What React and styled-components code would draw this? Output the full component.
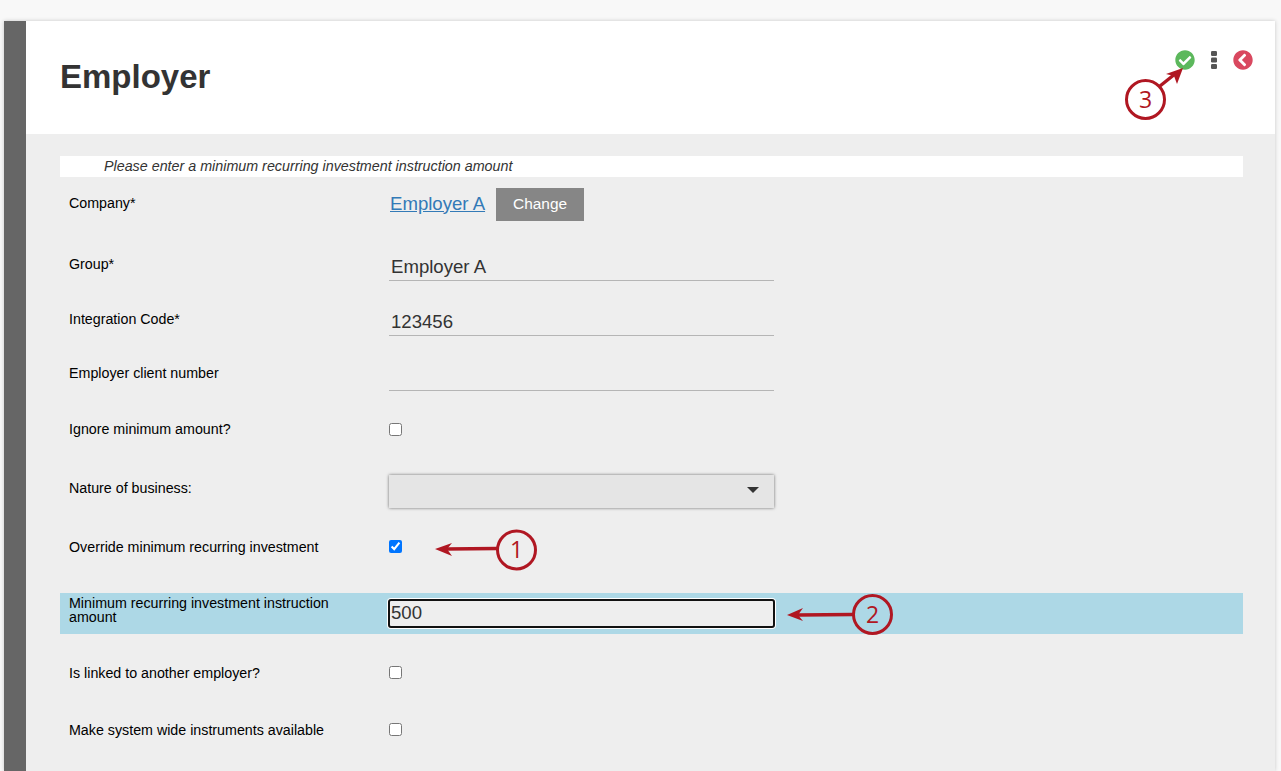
import React from 'react';
import styled, { createGlobalStyle } from 'styled-components';
import { FaCheckCircle, FaChevronCircleLeft } from 'react-icons/fa';

const GlobalStyle = createGlobalStyle`
  html, body {
    margin: 0;
    height: 100%;
    background: #f8f8f8;
    font-family: "Liberation Sans", Arial, sans-serif;
    overflow: hidden;
  }
`;

const PAGE = styled.div`
  position: relative;
  width: 1281px;
  height: 771px;
  overflow: hidden;
  padding: 21px 6px 0 4px;
  box-sizing: border-box;
`;

const CARD = styled.div`
  display: flex;
  height: 750px;
  box-shadow: 0 0 4px rgba(0, 0, 0, 0.2);
`;

const SIDEBAR = styled.div`
  width: 22px;
  background-color: #666;
`;

const MAIN = styled.div`
  flex: 1;
  display: flex;
  flex-direction: column;
  background-color: #eee;
`;

const HEADER = styled.div`
  height: 113px;
  background-color: #fff;
  display: flex;
  justify-content: space-between;
  padding: 0 22px 0 34px;
`;

const TITLE = styled.h1`
  margin: 37px 0 0;
  font-size: 33px;
  line-height: 38px;
  font-weight: bold;
  color: #333;
`;

const ACTIONS = styled.div`
  display: flex;
  align-items: center;
  height: 20px;
  margin-top: 29px;
`;

const ACTION = styled.span`
  display: flex;
  color: ${(p) => p.$color};
  font-size: ${(p) => p.$size}px;
  margin-left: ${(p) => p.$gap}px;
`;

const FORM = styled.div`
  padding: 22px 32px 0 34px;
`;

const NOTICE = styled.div`
  height: 21px;
  line-height: 21px;
  background-color: #fff;
  padding-left: 44px;
  font-size: 14.3px;
  font-style: italic;
  color: #333;
`;

const ROW = styled.div`
  display: grid;
  grid-template-columns: 329px 386px;
  align-items: center;
  height: ${(p) => p.$height}px;
  margin-top: ${(p) => p.$top}px;
  background-color: ${(p) => (p.$active ? '#add8e6' : 'transparent')};
`;

const LABEL = styled.label`
  padding: 0 40px 0 9px;
  margin-bottom: ${(p) => p.$lift || 0}px;
  font-size: 14.25px;
  line-height: 14px;
  color: #000;
`;

const COMPANY = styled.div`
  display: flex;
  align-items: center;
  padding-left: 1px;
`;

const LINK = styled.a`
  font-size: 18.6px;
  margin-bottom: 2px;
  color: #337ab7;
  text-decoration: underline;
`;

const BUTTON = styled.button`
  width: 88px;
  height: 33px;
  margin-left: 11px;
  border: none;
  padding: 0 0 2px;
  background-color: #868686;
  color: #fff;
  font-family: inherit;
  font-size: 15.4px;
`;

const INPUT = styled.input`
  display: block;
  box-sizing: border-box;
  width: 385px;
  height: 29px;
  padding: 2px 2px 0;
  border: none;
  border-bottom: 1px solid #b5b5b5;
  background: transparent;
  font-family: inherit;
  font-size: 18.6px;
  color: #333;
  outline: none;
`;

const FOCUSED_INPUT = styled(INPUT)`
  width: 387px;
  margin-left: -1px;
  padding: 0 2px 2px 1px;
  border: 2px solid #111;
  border-radius: 3px;
  background: #eee;
  box-shadow: 0 0 0 1px #fff;
`;

const CHECKBOX = styled.input.attrs({ type: 'checkbox' })`
  display: block;
  width: 13px;
  height: 13px;
  margin: 0 0 1px;
`;

const SELECT = styled.div`
  display: flex;
  align-items: center;
  justify-content: flex-end;
  box-sizing: border-box;
  width: 385px;
  height: 33px;
  padding-right: 15px;
  background-color: #e5e5e5;
  box-shadow: 0 0 3px rgba(0, 0, 0, 0.55);
`;

const CARET = styled.span`
  width: 0;
  height: 0;
  margin-bottom: 3px;
  border-left: 6px solid transparent;
  border-right: 6px solid transparent;
  border-top: 6px solid #333;
`;

const OVERLAY = styled.svg`
  position: absolute;
  left: 0;
  top: 0;
  pointer-events: none;
`;

const NUMBER = styled.text`
  font-family: "Open Sans", sans-serif;
  font-size: 23px;
  fill: #b01722;
  text-anchor: middle;
`;

const RED = '#b01722';

const Dots = () => (
    <svg width="6" height="18" viewBox="0 0 6 18" fill="#555">
        <rect x="0" y="0" width="6" height="5" rx="1.2" />
        <rect x="0" y="6.5" width="6" height="5" rx="1.2" />
        <rect x="0" y="13" width="6" height="5" rx="1.2" />
    </svg>
);

const Callout = ({ cx, cy, n, from, tip, head }) => (
    <g>
        <circle cx={cx} cy={cy} r="19" fill="none" stroke={RED} strokeWidth="3" />
        <line x1={from[0]} y1={from[1]} x2={tip[0]} y2={tip[1]} stroke={RED} strokeWidth="3.4" />
        <polygon points={head} fill={RED} />
        <NUMBER x={cx} y={cy + 8}>{n}</NUMBER>
    </g>
);

const App = () => {
    return (<>
        <GlobalStyle />
        <PAGE>
            <CARD>
                <SIDEBAR />
                <MAIN>
                    <HEADER>
                        <TITLE>Employer</TITLE>
                        <ACTIONS>
                            <ACTION $color="#5cb85c" $size={20}><FaCheckCircle /></ACTION>
                            <ACTION $gap={16}><Dots /></ACTION>
                            <ACTION $color="#d9485f" $size={20} $gap={16}><FaChevronCircleLeft /></ACTION>
                        </ACTIONS>
                    </HEADER>
                    <FORM>
                        <NOTICE>Please enter a minimum recurring investment instruction amount</NOTICE>
                        <ROW $height={33} $top={11}>
                            <LABEL $lift={3}>Company*</LABEL>
                            <COMPANY>
                                <LINK>Employer A</LINK>
                                <BUTTON>Change</BUTTON>
                            </COMPANY>
                        </ROW>
                        <ROW $height={29} $top={31}>
                            <LABEL $lift={5}>Group*</LABEL>
                            <INPUT defaultValue="Employer A" />
                        </ROW>
                        <ROW $height={29} $top={26}>
                            <LABEL $lift={5}>Integration Code*</LABEL>
                            <INPUT defaultValue="123456" />
                        </ROW>
                        <ROW $height={29} $top={26}>
                            <LABEL $lift={7}>Employer client number</LABEL>
                            <INPUT />
                        </ROW>
                        <ROW $height={28} $top={25}>
                            <LABEL $lift={2}>Ignore minimum amount?</LABEL>
                            <CHECKBOX />
                        </ROW>
                        <ROW $height={33} $top={31}>
                            <LABEL $lift={7}>Nature of business:</LABEL>
                            <SELECT><CARET /></SELECT>
                        </ROW>
                        <ROW $height={28} $top={25}>
                            <LABEL>Override minimum recurring investment</LABEL>
                            <CHECKBOX defaultChecked />
                        </ROW>
                        <ROW $height={41} $top={32} $active>
                            <LABEL $lift={8}>Minimum recurring investment instruction amount</LABEL>
                            <FOCUSED_INPUT defaultValue="500" />
                        </ROW>
                        <ROW $height={28} $top={25}>
                            <LABEL>Is linked to another employer?</LABEL>
                            <CHECKBOX />
                        </ROW>
                        <ROW $height={28} $top={29}>
                            <LABEL>Make system wide instruments available</LABEL>
                            <CHECKBOX />
                        </ROW>
                    </FORM>
                </MAIN>
            </CARD>
            <OVERLAY width="1281" height="771" viewBox="0 0 1281 771">
                <Callout cx={516.5} cy={550} n="1" from={[497, 548.5]} tip={[446, 549]} head="435,549 452,543 447,549 452,556" />
                <Callout cx={872.5} cy={614.5} n="2" from={[853, 614.5]} tip={[798, 615]} head="787,615 803,608 798,615 803,621" />
                <Callout cx={1145.5} cy={99.5} n="3" from={[1160, 86]} tip={[1175, 74]} head="1183,68 1177,84 1174,76 1166,74" />
            </OVERLAY>
        </PAGE>
    </>);
};

export default App;
